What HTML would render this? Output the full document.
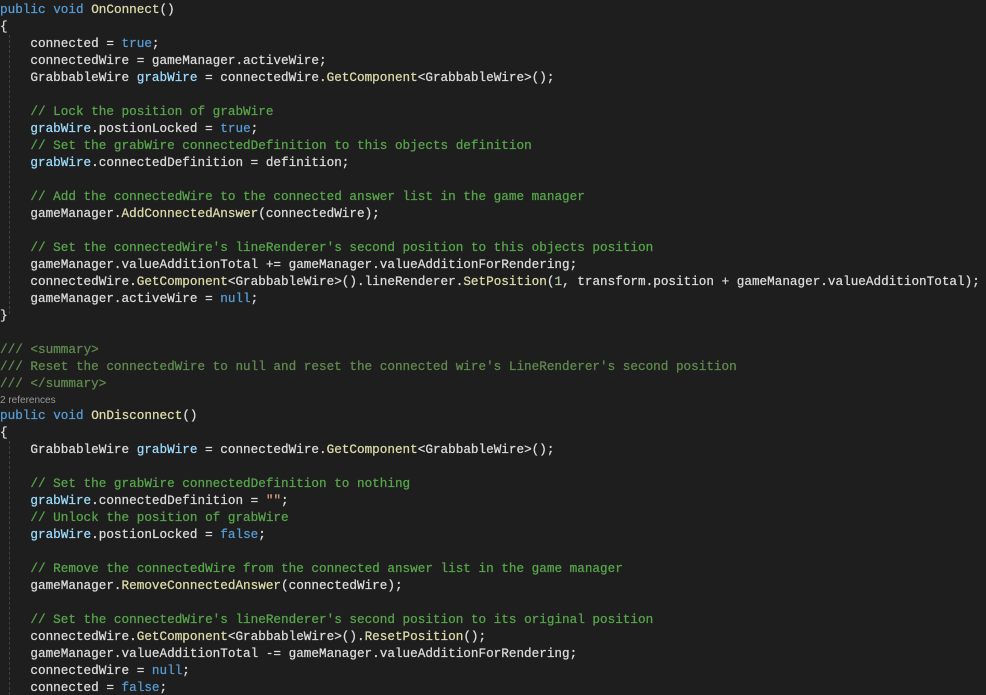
<!DOCTYPE html>
<html><head><style>
html,body{margin:0;padding:0;background:#1e1e1e;width:986px;height:695px;overflow:hidden}
pre{margin:0;padding-top:1px;font-family:"Liberation Mono",monospace;font-size:12.66px;line-height:17px;color:#dcdcdc;white-space:pre;position:relative;-webkit-text-stroke:0.25px}
.k{color:#569cd6}.m{color:#dcdcaa}.v{color:#9cdcfe}.c{color:#57a64a}.x{color:#608b4e}.s{color:#d69d85}.n{color:#b5cea8}
.r{display:block;font-family:"Liberation Sans",sans-serif;font-size:10px;line-height:15px;color:#999;-webkit-text-stroke:0;padding-top:1px;height:14px}
.g{position:absolute;left:9px;width:0;border-left:1px dashed #404040}
</style></head><body>
<pre><span class="g" style="top:35px;height:279px"></span><span class="g" style="top:441px;height:254px"></span><span class="k">public</span> <span class="k">void</span> <span class="m">OnConnect</span>()
{
    connected = <span class="k">true</span>;
    connectedWire = gameManager.activeWire;
    GrabbableWire <span class="v">grabWire</span> = connectedWire.<span class="m">GetComponent</span>&lt;GrabbableWire&gt;();

    <span class="c">// Lock the position of grabWire</span>
    <span class="v">grabWire</span>.postionLocked = <span class="k">true</span>;
    <span class="c">// Set the grabWire connectedDefinition to this objects definition</span>
    <span class="v">grabWire</span>.connectedDefinition = definition;

    <span class="c">// Add the connectedWire to the connected answer list in the game manager</span>
    gameManager.<span class="m">AddConnectedAnswer</span>(connectedWire);

    <span class="c">// Set the connectedWire's lineRenderer's second position to this objects position</span>
    gameManager.valueAdditionTotal += gameManager.valueAdditionForRendering;
    connectedWire.<span class="m">GetComponent</span>&lt;GrabbableWire&gt;().lineRenderer.<span class="m">SetPosition</span>(<span class="n">1</span>, transform.position + gameManager.valueAdditionTotal);
    gameManager.activeWire = <span class="k">null</span>;
}

<span class="x">///</span> <span class="x">&lt;summary&gt;</span>
<span class="x">/// Reset the connectedWire to null and reset the connected wire's LineRenderer's second position</span>
<span class="x">/// &lt;/summary&gt;</span>
<span class="r">2 references</span><span class="k">public</span> <span class="k">void</span> <span class="m">OnDisconnect</span>()
{
    GrabbableWire <span class="v">grabWire</span> = connectedWire.<span class="m">GetComponent</span>&lt;GrabbableWire&gt;();

    <span class="c">// Set the grabWire connectedDefinition to nothing</span>
    <span class="v">grabWire</span>.connectedDefinition = <span class="s">""</span>;
    <span class="c">// Unlock the position of grabWire</span>
    <span class="v">grabWire</span>.postionLocked = <span class="k">false</span>;

    <span class="c">// Remove the connectedWire from the connected answer list in the game manager</span>
    gameManager.<span class="m">RemoveConnectedAnswer</span>(connectedWire);

    <span class="c">// Set the connectedWire's lineRenderer's second position to its original position</span>
    connectedWire.<span class="m">GetComponent</span>&lt;GrabbableWire&gt;().<span class="m">ResetPosition</span>();
    gameManager.valueAdditionTotal -= gameManager.valueAdditionForRendering;
    connectedWire = <span class="k">null</span>;
    connected = <span class="k">false</span>;
</pre>
</body></html>
